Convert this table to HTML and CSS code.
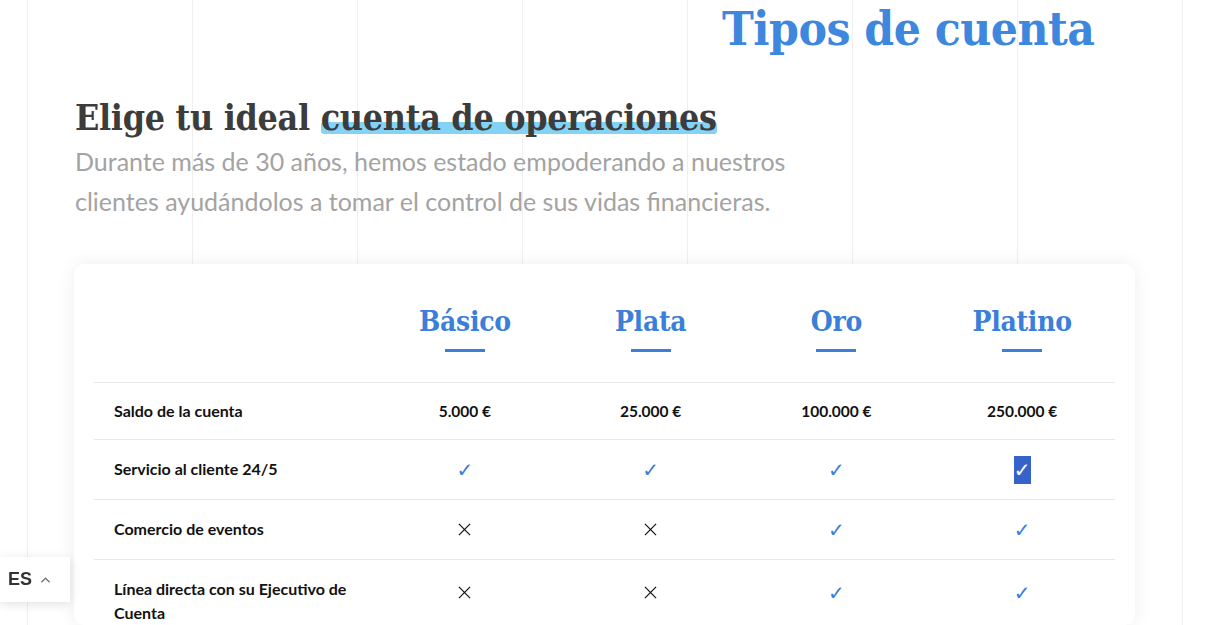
FILE: index.html
```html
<!DOCTYPE html>
<html lang="es">
<head>
<meta charset="utf-8">
<title>Tipos de cuenta</title>
<link rel="stylesheet" href="styles.css">
</head>
<body>
<main class="page">
  <h1 class="top-title">Tipos de cuenta</h1>
  <section class="intro">
    <h2 class="intro-title">Elige tu ideal <span class="hl">cuenta de operaciones</span></h2>
    <p class="intro-text">Durante más de 30 años, hemos estado empoderando a nuestros clientes ayudándolos a tomar el control de sus vidas financieras.</p>
  </section>
  <section class="card">
    <div class="grid">
      <div class="head-cell"></div>
      <div class="head-cell"><span class="plan">Básico</span><span class="bar"></span></div>
      <div class="head-cell"><span class="plan">Plata</span><span class="bar"></span></div>
      <div class="head-cell"><span class="plan">Oro</span><span class="bar"></span></div>
      <div class="head-cell"><span class="plan">Platino</span><span class="bar"></span></div>

      <div class="cell label first">Saldo de la cuenta</div>
      <div class="cell first">5.000 €</div>
      <div class="cell first">25.000 €</div>
      <div class="cell first">100.000 €</div>
      <div class="cell first">250.000 €</div>

      <div class="cell label">Servicio al cliente 24/5</div>
      <div class="cell"><span class="check">✓</span></div>
      <div class="cell"><span class="check">✓</span></div>
      <div class="cell"><span class="check">✓</span></div>
      <div class="cell"><span class="check selected">✓</span></div>

      <div class="cell label">Comercio de eventos</div>
      <div class="cell"><svg class="cross" viewBox="0 0 14 14"><path d="M1 1L13 13M13 1L1 13"/></svg></div>
      <div class="cell"><svg class="cross" viewBox="0 0 14 14"><path d="M1 1L13 13M13 1L1 13"/></svg></div>
      <div class="cell"><span class="check">✓</span></div>
      <div class="cell"><span class="check">✓</span></div>

      <div class="cell label">Línea directa con su Ejecutivo de Cuenta</div>
      <div class="cell"><svg class="cross" viewBox="0 0 14 14"><path d="M1 1L13 13M13 1L1 13"/></svg></div>
      <div class="cell"><svg class="cross" viewBox="0 0 14 14"><path d="M1 1L13 13M13 1L1 13"/></svg></div>
      <div class="cell"><span class="check">✓</span></div>
      <div class="cell"><span class="check">✓</span></div>
    </div>
  </section>
</main>
<div class="lang">
  <span class="lang-code">ES</span>
  <svg class="chev" viewBox="0 0 12 8"><path d="M1.5 6.5L6 2l4.5 4.5"/></svg>
</div>
</body>
</html>
```

FILE: styles.css
```css
html, body {
  margin: 0;
  padding: 0;
}
body {
  background-color: #fff;
  background-image: linear-gradient(to right, #efefef 1px, transparent 1px);
  background-size: 165px 100%;
  background-position: 27px 0;
  font-family: Lato, "Noto Sans", sans-serif;
  height: 625px;
  overflow: hidden;
}
.page {
  padding-left: 74px;
  width: 1061px;
}
.top-title {
  margin: 0;
  padding-left: 648px;
  font-family: "DejaVu Serif Condensed", "DejaVu Serif", serif;
  font-stretch: condensed;
  font-weight: 700;
  font-size: 47.5px;
  line-height: 56px;
  color: #3d87de;
  letter-spacing: -0.5px;
}
.intro {
  padding-top: 39px;
  padding-left: 1px;
}
.intro-title {
  margin: 0;
  font-family: "DejaVu Serif Condensed", "DejaVu Serif", serif;
  font-stretch: condensed;
  font-weight: 700;
  font-size: 35.5px;
  line-height: 46px;
  color: #3c3c3c;
  letter-spacing: -0.3px;
}
.hl {
  position: relative;
  z-index: 0;
}
.hl::after {
  content: "";
  position: absolute;
  left: 0;
  right: 0;
  bottom: 4px;
  height: 12px;
  background: #82d3f5;
  border-radius: 3px;
  z-index: -1;
}
.intro-text {
  margin: 0;
  width: 760px;
  font-size: 25px;
  line-height: 40px;
  color: #a3a3a3;
  font-weight: 400;
}
.card {
  margin-top: 43px;
  background: #fff;
  border-radius: 10px;
  box-shadow: 0 0 18px rgba(0, 0, 0, 0.07);
  padding: 0 20px;
}
.grid {
  display: grid;
  grid-template-columns: 278px repeat(4, 1fr);
}
.head-cell {
  display: flex;
  flex-direction: column;
  align-items: center;
  padding: 41px 0 30px;
  min-height: 47px;
}
.plan {
  font-family: "DejaVu Serif Condensed", "DejaVu Serif", serif;
  font-stretch: condensed;
  font-weight: 700;
  font-size: 28px;
  line-height: 34px;
  color: #3a7fd9;
  letter-spacing: -0.3px;
}
.bar {
  display: block;
  width: 40px;
  height: 3px;
  margin-top: 10px;
  background: #3a7fd9;
}
.cell {
  border-top: 1px solid #e9e9e9;
  display: flex;
  align-items: center;
  justify-content: center;
  min-height: 59px;
  font-size: 15.5px;
  font-weight: 700;
  color: #111;
  line-height: 24px;
}
.cell.first {
  min-height: 56px;
}
.cell.label {
  justify-content: flex-start;
  padding: 17px 4px 0 20px;
  align-items: flex-start;
  box-sizing: border-box;
  font-size: 16px;
}
.cell.label.first {
  padding-top: 16px;
}
.check {
  font-family: "DejaVu Sans", sans-serif;
  font-size: 20px;
  line-height: 28px;
  color: #3a7fd9;
  font-weight: 400;
}
.check.selected {
  background: #3563c9;
  color: #fff;
  padding: 0;
}
.cross {
  width: 13px;
  height: 13px;
  fill: none;
  stroke: #111;
  stroke-width: 1.3;
}
.lang {
  position: fixed;
  left: 0;
  top: 557px;
  width: 70px;
  height: 45px;
  background: #fff;
  box-shadow: 0 2px 10px rgba(0, 0, 0, 0.12);
  display: flex;
  align-items: center;
  padding-left: 8px;
  box-sizing: border-box;
  gap: 8px;
}
.lang-code {
  font-family: "Liberation Sans", Arial, sans-serif;
  font-weight: 700;
  font-size: 18px;
  color: #333;
}
.chev {
  width: 11px;
  height: 8px;
  fill: none;
  stroke: #777;
  stroke-width: 1.5;
}
```
